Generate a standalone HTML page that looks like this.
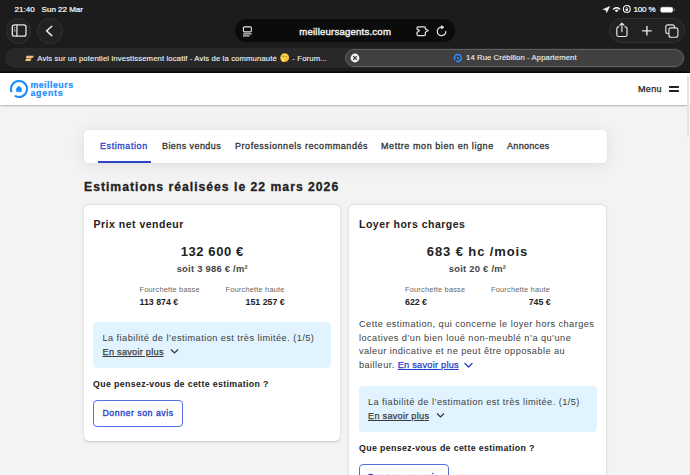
<!DOCTYPE html>
<html><head><meta charset="utf-8">
<style>
*{margin:0;padding:0;box-sizing:border-box}
html,body{width:690px;height:475px;overflow:hidden;background:#f3f3f3;font-family:"Liberation Sans",sans-serif}
.a{position:absolute;white-space:nowrap}
#chrome{position:absolute;left:0;top:0;width:690px;height:72px;background:#1c1c1c}
.st{color:#fff;font-size:8px;line-height:10px;-webkit-text-stroke:0.2px #fff}
.circ{position:absolute;width:25.5px;height:25.5px;border-radius:50%;background:#222;border:1px solid #323232}
#url{left:235.4px;top:18.5px;width:219.3px;height:23.5px;border-radius:12px;background:#0b0b0b}
#pill{left:608.8px;top:18.1px;width:76px;height:25.4px;border-radius:13px;background:#222;border:1px solid #323232}
#tabbar{left:4.6px;top:48.1px;width:680px;height:20.2px;border-radius:10.1px;background:#282828}
#tab2{left:345.4px;top:48.9px;width:338.8px;height:18.3px;border-radius:9.2px;background:#404040;border:1px solid #5e5e5e}
.tabt{color:#f0f0f0;font-size:7.7px;line-height:10px;-webkit-text-stroke:0.12px #f0f0f0}
#header{left:0;top:73px;width:690px;height:31.8px;background:#fff;box-shadow:0 1.5px 1.5px rgba(0,0,0,.2)}
#nav{left:84px;top:129.6px;width:522.5px;height:33.1px;background:#fff;border-radius:4.5px;box-shadow:0 2px 16px rgba(0,0,0,.09),0 0 1.5px rgba(0,0,0,.08)}
.nv{font-size:9px;line-height:10px;color:#333;-webkit-text-stroke:0.3px currentColor}
.card{position:absolute;background:#fff;border-radius:5px;box-shadow:0 0.5px 2.5px rgba(0,0,0,.2)}
.h2{font-size:10.5px;line-height:12px;color:#222;font-weight:bold;letter-spacing:0.5px}
.big{font-size:13px;line-height:14px;color:#222;font-weight:bold;letter-spacing:0.6px}
.soit{font-size:9.4px;line-height:11px;color:#444;font-weight:bold;letter-spacing:0.25px}
.fl{font-size:7.4px;line-height:9px;color:#666;letter-spacing:0.2px}
.fv{font-size:8.8px;line-height:10px;color:#222;font-weight:bold}
.info{position:absolute;background:#e0f3fe;border-radius:4px}
.it{font-size:9.2px;line-height:11px;color:#3d3d3d;letter-spacing:0.45px}
.lk{text-decoration:underline;text-underline-offset:1px;letter-spacing:0.25px;-webkit-text-stroke:0.25px currentColor}
.q{font-size:8.8px;line-height:10px;color:#222;font-weight:bold;letter-spacing:0.35px}
.btn{position:absolute;border:1px solid #5570e0;border-radius:4px;background:#fff}
.bt{font-size:8.8px;line-height:10px;color:#2b44c6;-webkit-text-stroke:0.35px #2b44c6;letter-spacing:0.5px}
.p{font-size:9.2px;line-height:13.6px;color:#3d3d3d;letter-spacing:0.45px}
</style></head><body>
<div id="chrome"></div>
<!-- status bar -->
<div class="a st" style="left:14.6px;top:4.5px;letter-spacing:0px">21:40</div>
<div class="a st" style="left:41.6px;top:4.5px;letter-spacing:0px">Sun 22 Mar</div>
<div class="a st" style="left:633.4px;top:4.5px;letter-spacing:-0.1px">100 %</div>
<svg class="a" style="left:600px;top:4px" width="80" height="10" viewBox="0 0 80 10">
 <path d="M3 5.4 L9.7 2.4 L6.7 8.6 L6 6 Z" fill="#fff" stroke="#fff" stroke-width="0.5" stroke-linejoin="round"/>
 <path d="M13.5 5 Q16.6 2.6 19.7 5" stroke="#fff" stroke-width="1.4" fill="none" stroke-linecap="round"/>
 <path d="M15 6.4 Q16.6 5.2 18.2 6.4 L16.6 8 Z" fill="#fff" stroke="#fff" stroke-width="0.5" stroke-linejoin="round"/>
 <circle cx="26.8" cy="4.9" r="3.4" stroke="#fff" stroke-width="1.1" fill="none"/>
 <rect x="25.6" y="4.9" width="2.4" height="1.9" rx="0.3" fill="#fff"/>
 <path d="M26.1 5 V4.1 A0.7 0.7 0 0 1 27.5 4.1 V5" stroke="#fff" stroke-width="0.6" fill="none"/>
 <rect x="60.4" y="3.1" width="12.6" height="5.3" rx="1.9" fill="#fff" stroke="#8a8a8a" stroke-width="0.6"/>
 <path d="M74.2 4.7 Q75.2 5.75 74.2 6.8" stroke="#8a8a8a" stroke-width="0.9" fill="none"/>
</svg>
<!-- left buttons -->
<div class="circ" style="left:5.5px;top:18.3px"></div>
<div class="circ" style="left:37.3px;top:18.3px"></div>
<svg class="a" style="left:5.5px;top:18.3px" width="26" height="26" viewBox="0 0 26 26">
 <rect x="6.3" y="6.9" width="13.7" height="11.3" rx="2.2" stroke="#e6e6e6" stroke-width="1.3" fill="none"/>
 <line x1="10.9" y1="6.9" x2="10.9" y2="18.2" stroke="#e6e6e6" stroke-width="1.3"/>
 <line x1="7.9" y1="9.6" x2="9.4" y2="9.6" stroke="#aaa" stroke-width="0.9"/>
 <line x1="7.9" y1="11.3" x2="9.4" y2="11.3" stroke="#aaa" stroke-width="0.9"/>
 <line x1="7.9" y1="13" x2="9.4" y2="13" stroke="#ddd" stroke-width="0.9"/>
</svg>
<svg class="a" style="left:37.3px;top:18.3px" width="26" height="26" viewBox="0 0 26 26">
 <path d="M14.8 8.2 L9.6 12.9 L14.8 17.6" stroke="#e6e6e6" stroke-width="1.5" fill="none" stroke-linecap="round" stroke-linejoin="round"/>
</svg>
<!-- url bar -->
<div id="url" class="a"></div>
<svg class="a" style="left:242px;top:25.5px" width="12" height="12" viewBox="0 0 12 12">
 <rect x="1.4" y="0.9" width="8" height="5" rx="1.2" stroke="#e6e6e6" stroke-width="1.1" fill="none"/>
 <line x1="1" y1="7.9" x2="9.8" y2="7.9" stroke="#e6e6e6" stroke-width="1.1"/>
 <line x1="1" y1="9.9" x2="7.6" y2="9.9" stroke="#e6e6e6" stroke-width="1.1"/>
</svg>
<div class="a" style="left:299.3px;top:25.8px;color:#f2f2f2;font-size:9.6px;line-height:12px;-webkit-text-stroke:0.4px #f2f2f2;letter-spacing:0.2px">meilleursagents.com</div>
<svg class="a" style="left:415px;top:25px" width="34" height="12" viewBox="0 0 34 12">
 <path d="M3.2 1.8 H9 Q10.4 1.8 10.4 3.2 V4 L13.1 5.6 L10.4 7.2 V9.2 Q10.4 10.6 9 10.6 H3.2 Q2 10.6 2 9.2 V7.4 L4.5 5.6 L2 4 V3.2 Q2 1.8 3.2 1.8 Z" stroke="#e6e6e6" stroke-width="1.2" fill="none" stroke-linejoin="round"/>
 <path d="M30.9 6.4 A4.3 4.3 0 1 1 27.6 2.2" stroke="#e6e6e6" stroke-width="1.2" fill="none" stroke-linecap="round"/>
 <path d="M26.4 0.6 L29 2.2 L26.4 3.9 Z" fill="#e6e6e6" stroke="#e6e6e6" stroke-width="0.6" stroke-linejoin="round"/>
</svg>
<!-- right pill -->
<div id="pill" class="a"></div>
<svg class="a" style="left:609px;top:18px" width="76" height="25" viewBox="0 0 76 25">
 <path d="M10.3 8.9 H9.6 Q7.8 8.9 7.8 10.7 V16.7 Q7.8 18.5 9.6 18.5 H16.2 Q18 18.5 18 16.7 V10.7 Q18 8.9 16.2 8.9 H15.5" stroke="#e6e6e6" stroke-width="1.2" fill="none"/>
 <path d="M12.9 13.6 V5.1 M10.8 7.2 L12.9 5.1 L15 7.2" stroke="#e6e6e6" stroke-width="1.2" fill="none" stroke-linecap="round" stroke-linejoin="round"/>
 <path d="M37.9 8.1 V17.6 M33.1 12.9 H42.7" stroke="#e6e6e6" stroke-width="1.4" fill="none"/>
 <rect x="56.8" y="6.9" width="8.6" height="8.6" rx="2" stroke="#e6e6e6" stroke-width="1.1" fill="none"/>
 <rect x="59.9" y="9.9" width="9" height="9.3" rx="2" stroke="#e6e6e6" stroke-width="1.1" fill="#222"/>
</svg>
<!-- tabs -->
<div id="tabbar" class="a"></div>
<div id="tab2" class="a"></div>
<svg class="a" style="left:25px;top:55px" width="10" height="7" viewBox="0 0 10 7">
 <path d="M1.6 0.7 H8.4 Q8.9 0.7 8.6 1.3 L7.9 2.6 Q7.7 3 7.2 3 H0.9 Z" fill="#eec27e"/>
 <path d="M1.2 3.6 H6.6 L5.7 5.6 Q5.5 6 5 6 H0.2 Z" fill="#eec27e"/>
</svg>
<div class="a tabt" style="left:37.3px;top:53.3px;letter-spacing:0.135px">Avis sur un potentiel investissement locatif - Avis de la communauté <svg width="9.4" height="9.4" viewBox="0 0 10 10" style="display:inline-block;vertical-align:-1.5px;margin:0 1px 0 0.5px"><defs><radialGradient id="eg" cx="0.45" cy="0.35" r="0.7"><stop offset="0" stop-color="#ffe45a"/><stop offset="0.7" stop-color="#f9c431"/><stop offset="1" stop-color="#ee9a1e"/></radialGradient></defs><circle cx="5" cy="5" r="4.7" fill="url(#eg)"/><ellipse cx="3.5" cy="3.6" rx="0.6" ry="0.9" fill="#7a4a12"/><ellipse cx="6.5" cy="4" rx="0.8" ry="0.6" fill="#7a4a12"/><path d="M6 6.3 L6.9 6.6" stroke="#a0621a" stroke-width="0.6"/><path d="M1.6 7 Q3 6 4.2 7.2 L4 9.3 Q2.2 9.5 1.6 8.3 Z" fill="#ffe37a"/></svg> - Forum...</div>
<svg class="a" style="left:350px;top:53px" width="10" height="10" viewBox="0 0 10 10">
 <circle cx="5" cy="5" r="4.4" fill="#f2f2f2"/>
 <path d="M3.2 3.2 L6.8 6.8 M6.8 3.2 L3.2 6.8" stroke="#333" stroke-width="1.2"/>
</svg>
<svg class="a" style="left:453px;top:53.4px" width="10" height="10" viewBox="0 0 10 10">
 <path d="M1.75 6.4 A3.5 3.5 0 1 1 3.6 8.2" stroke="#2f8dff" stroke-width="1.5" fill="none" stroke-linecap="round"/>
 <circle cx="5" cy="5" r="1.1" fill="#2f8dff"/>
</svg>
<div class="a tabt" style="left:466px;top:53.3px;letter-spacing:0.1px">14 Rue Crébillon - Appartement</div>

<!-- page header -->
<div class="a" style="left:0;top:70.5px;width:690px;height:2.5px;background:linear-gradient(#141414,#050505)"></div>
<div id="header" class="a"></div>
<svg class="a" style="left:9px;top:79px" width="20" height="20" viewBox="0 0 20 20">
 <path d="M2.36 12.37 A8 8 0 1 1 6.46 17.17" stroke="#1a8cff" stroke-width="2.1" fill="none" stroke-linecap="round"/>
 <path d="M7.4 12.7 V9.3 L9.95 7.1 L12.5 9.3 V12.7 Z" fill="#1a8cff" stroke="#1a8cff" stroke-width="0.5" stroke-linejoin="round"/>
</svg>
<div class="a" style="left:30.4px;top:80.7px;color:#1a8cff;font-size:8.8px;line-height:8.1px;font-weight:bold;letter-spacing:0.5px;-webkit-text-stroke:0.2px #1a8cff">meilleurs<br><span style="letter-spacing:0.8px">agents</span></div>
<div class="a" style="left:638px;top:84px;color:#222;font-size:9px;line-height:10px;letter-spacing:0.35px;-webkit-text-stroke:0.25px #222">Menu</div>
<div class="a" style="left:668.8px;top:85.8px;width:10.5px;height:1.9px;background:#222;border-radius:0.5px"></div>
<div class="a" style="left:668.8px;top:90.4px;width:10.5px;height:1.9px;background:#222;border-radius:0.5px"></div>
<div class="a" style="left:687.2px;top:75.5px;width:1.5px;height:61px;background:#e4e4e4;border-radius:1px"></div>

<!-- nav -->
<div id="nav" class="a"></div>
<div class="a nv" style="left:100px;top:141.4px;color:#2b44c6;letter-spacing:0.57px">Estimation</div>
<div class="a" style="left:97.5px;top:161px;width:53px;height:2px;background:#2b44c6"></div>
<div class="a nv" style="left:162px;top:141.4px;letter-spacing:0.42px">Biens vendus</div>
<div class="a nv" style="left:235px;top:141.4px;letter-spacing:0.56px">Professionnels recommandés</div>
<div class="a nv" style="left:381px;top:141.4px;letter-spacing:0.57px">Mettre mon bien en ligne</div>
<div class="a nv" style="left:507px;top:141.4px;letter-spacing:0.32px">Annonces</div>

<div class="a" style="left:84px;top:180px;color:#222;font-size:12.2px;line-height:14px;font-weight:bold;letter-spacing:1px;-webkit-text-stroke:0.3px #222">Estimations réalisées le 22 mars 2026</div>

<!-- card 1 -->
<div class="card" style="left:84px;top:205px;width:256.3px;height:236.2px"></div>
<div class="a h2" style="left:93.5px;top:217.5px">Prix net vendeur</div>
<div class="a big" style="left:84px;width:256.5px;text-align:center;top:244.7px">132 600 €</div>
<div class="a soit" style="left:84px;width:256.5px;text-align:center;top:262.5px">soit 3 986 € /m²</div>
<div class="a fl" style="left:139.5px;top:285px">Fourchette basse</div>
<div class="a fv" style="left:139.5px;top:296.5px">113 874 €</div>
<div class="a fl" style="left:225.5px;top:285px">Fourchette haute</div>
<div class="a fv" style="left:200px;width:84.7px;text-align:right;top:296.5px">151 257 €</div>
<div class="info" style="left:93px;top:322px;width:238px;height:45.5px"></div>
<div class="a it" style="left:102.5px;top:333px">La fiabilité de l’estimation est très limitée. (1/5)</div>
<div class="a it" style="left:102.5px;top:346.5px"><span class="lk">En savoir plu<span style="letter-spacing:0">s</span></span></div>
<svg class="a" style="left:170px;top:348px" width="9" height="7" viewBox="0 0 9 7">
 <path d="M1 1.5 L4.5 5 L8 1.5" stroke="#333" stroke-width="1.2" fill="none"/>
</svg>
<div class="a q" style="left:93px;top:379px">Que pensez-vous de cette estimation ?</div>
<div class="btn" style="left:93px;top:400px;width:90px;height:27px"></div>
<div class="a bt" style="left:102.5px;top:408px">Donner son avis</div>

<!-- card 2 -->
<div class="card" style="left:348.7px;top:205px;width:257px;height:290px"></div>
<div class="a h2" style="left:359px;top:217.5px">Loyer hors charges</div>
<div class="a big" style="left:349px;width:257px;text-align:center;top:244.7px;letter-spacing:0.9px">683 € hc /mois</div>
<div class="a soit" style="left:349px;width:257px;text-align:center;top:262.5px">soit 20 € /m²</div>
<div class="a fl" style="left:405px;top:285px">Fourchette basse</div>
<div class="a fv" style="left:405px;top:296.5px">622 €</div>
<div class="a fl" style="left:491px;top:285px">Fourchette haute</div>
<div class="a fv" style="left:466px;width:84.7px;text-align:right;top:296.5px">745 €</div>
<div class="a p" style="left:359px;top:318px;white-space:normal;width:240px">Cette estimation, qui concerne le loyer hors charges<br>locatives d’un bien loué non-meublé n’a qu’une<br>valeur indicative et ne peut être opposable au<br>bailleur. <span class="lk" style="color:#2440c4">En savoir plu<span style="letter-spacing:0">s</span></span></div>
<svg class="a" style="left:464px;top:362px" width="9" height="7" viewBox="0 0 9 7">
 <path d="M1 1.5 L4.5 5 L8 1.5" stroke="#2440c4" stroke-width="1.35" fill="none" stroke-linecap="round" stroke-linejoin="round"/>
</svg>
<div class="info" style="left:358.5px;top:386px;width:238px;height:45.5px"></div>
<div class="a it" style="left:368px;top:397px">La fiabilité de l’estimation est très limitée. (1/5)</div>
<div class="a it" style="left:368px;top:410.5px"><span class="lk">En savoir plu<span style="letter-spacing:0">s</span></span></div>
<svg class="a" style="left:436px;top:412px" width="9" height="7" viewBox="0 0 9 7">
 <path d="M1 1.5 L4.5 5 L8 1.5" stroke="#333" stroke-width="1.2" fill="none"/>
</svg>
<div class="a q" style="left:359px;top:443px">Que pensez-vous de cette estimation ?</div>
<div class="btn" style="left:358.5px;top:464px;width:90px;height:27px"></div>
<div class="a bt" style="left:368px;top:472px">Donner son avis</div>
</body></html>
